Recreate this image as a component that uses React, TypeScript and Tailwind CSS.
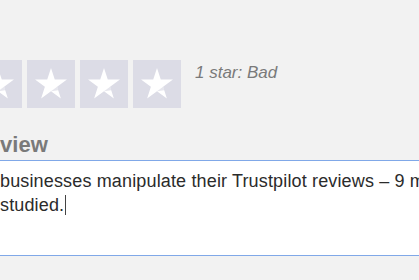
import React from 'react';

const STAR_POINTS =
    '24,8 27.77,19.61 39.98,19.61 30.11,26.78 33.87,38.39 24,31.22 14.13,38.39 17.89,26.78 8.02,19.61 20.23,19.61';

function StarBox() {
    return (
        <div className="w-[48px] h-[48px] shrink-0 bg-[#dcdce6]">
            <svg width="48" height="48" viewBox="0 0 48 48">
                <polygon points={STAR_POINTS} fill="#ffffff" />
                {/* trustpilot-style notch on the lower right leg */}
                <polygon points="24,31.22 30.11,26.78 31.2,30.2" fill="#dcdce6" opacity="0.7" />
            </svg>
        </div>
    );
}

export default function App() {
    return (
        <div
            className="w-[419px] h-[280px] overflow-hidden bg-[#f2f2f2] pt-[60px]"
            style={{ fontFamily: '"Liberation Sans", Arial, sans-serif' }}
        >
            <div className="flex items-start">
                <div className="flex gap-[5px] -ml-[79px]">
                    {[0, 1, 2, 3, 4].map(i => (
                        <StarBox key={i} />
                    ))}
                </div>
                <span className="ml-[14px] pt-[3px] text-[17px] leading-[20px] italic text-[#7a7a7a] whitespace-nowrap">
                    1 star: Bad
                </span>
            </div>

            <h2 className="mt-[23px] -ml-[28px] text-[22px] leading-[28px] font-bold text-[#7a7a7a]">Review</h2>

            <div className="mt-[1px] -ml-[20px] w-[480px] h-[96px] bg-white border-y border-[#80a8e8] pl-[20px] pt-[8px] overflow-hidden">
                <p className="text-[18px] leading-[24px] tracking-[0.15px] text-[#2b2b2b] whitespace-nowrap">
                    businesses manipulate their Trustpilot reviews – 9 million reviews
                </p>
                <p className="text-[18px] leading-[24px] tracking-[0.15px] text-[#2b2b2b] whitespace-nowrap">
                    studied.<span className="inline-block w-[1px] h-[20px] bg-[#444] align-[-4px] ml-[1px]" />
                </p>
            </div>
        </div>
    );
}
